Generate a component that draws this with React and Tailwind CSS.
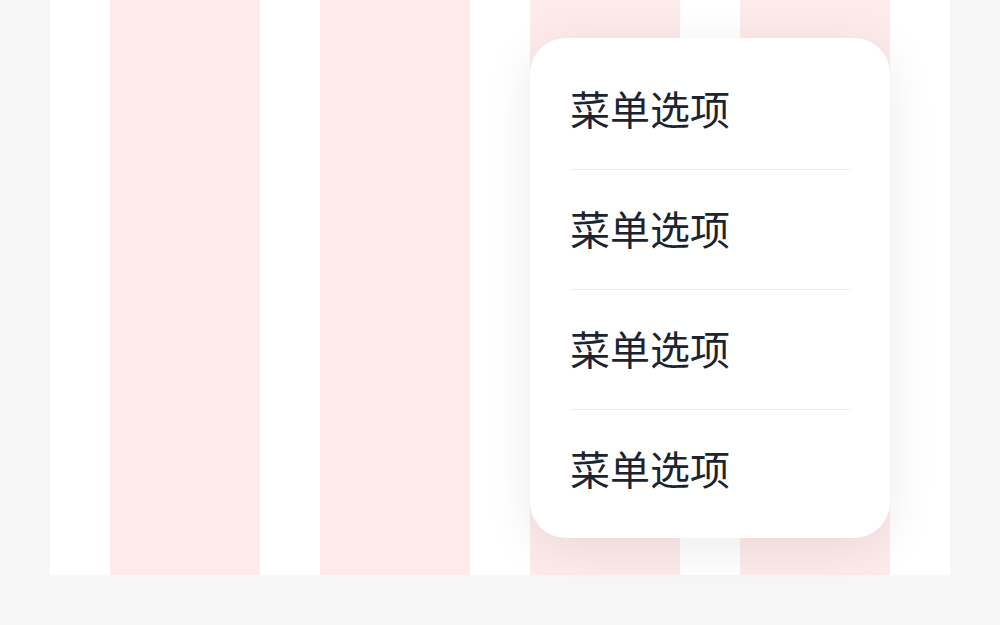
export default function App() {
  const items = ["菜单选项", "菜单选项", "菜单选项", "菜单选项"];
  return (
    <div className="w-[1000px] h-[625px] bg-[#f7f7f7] px-[50px] pb-[50px] overflow-hidden" style={{ fontFamily: '"Noto Sans CJK SC", "Noto Sans", sans-serif' }}>
      <div className="relative h-[575px] bg-white px-[60px] flex gap-[60px]">
        <div className="w-[150px] h-full bg-[#fdebec]" />
        <div className="w-[150px] h-full bg-[#fdebec]" />
        <div className="w-[150px] h-full bg-[#fdebec]" />
        <div className="w-[150px] h-full bg-[#fdebec]" />
        <div className="absolute left-[480px] top-[38px] w-[360px] h-[500px] bg-white rounded-[36px] shadow-[0_10px_50px_rgba(0,0,0,0.08)] px-[40px] pt-[12px] pb-[8px] flex flex-col">
          {items.map((t, i) => (
            <div key={i} className={"h-[120px] shrink-0 flex items-center pb-[4px] text-[40px] leading-none text-[#1c2430] " + (i < items.length - 1 ? "border-b border-[#efefef]" : "")}>
              {t}
            </div>
          ))}
        </div>
      </div>
    </div>
  );
}
